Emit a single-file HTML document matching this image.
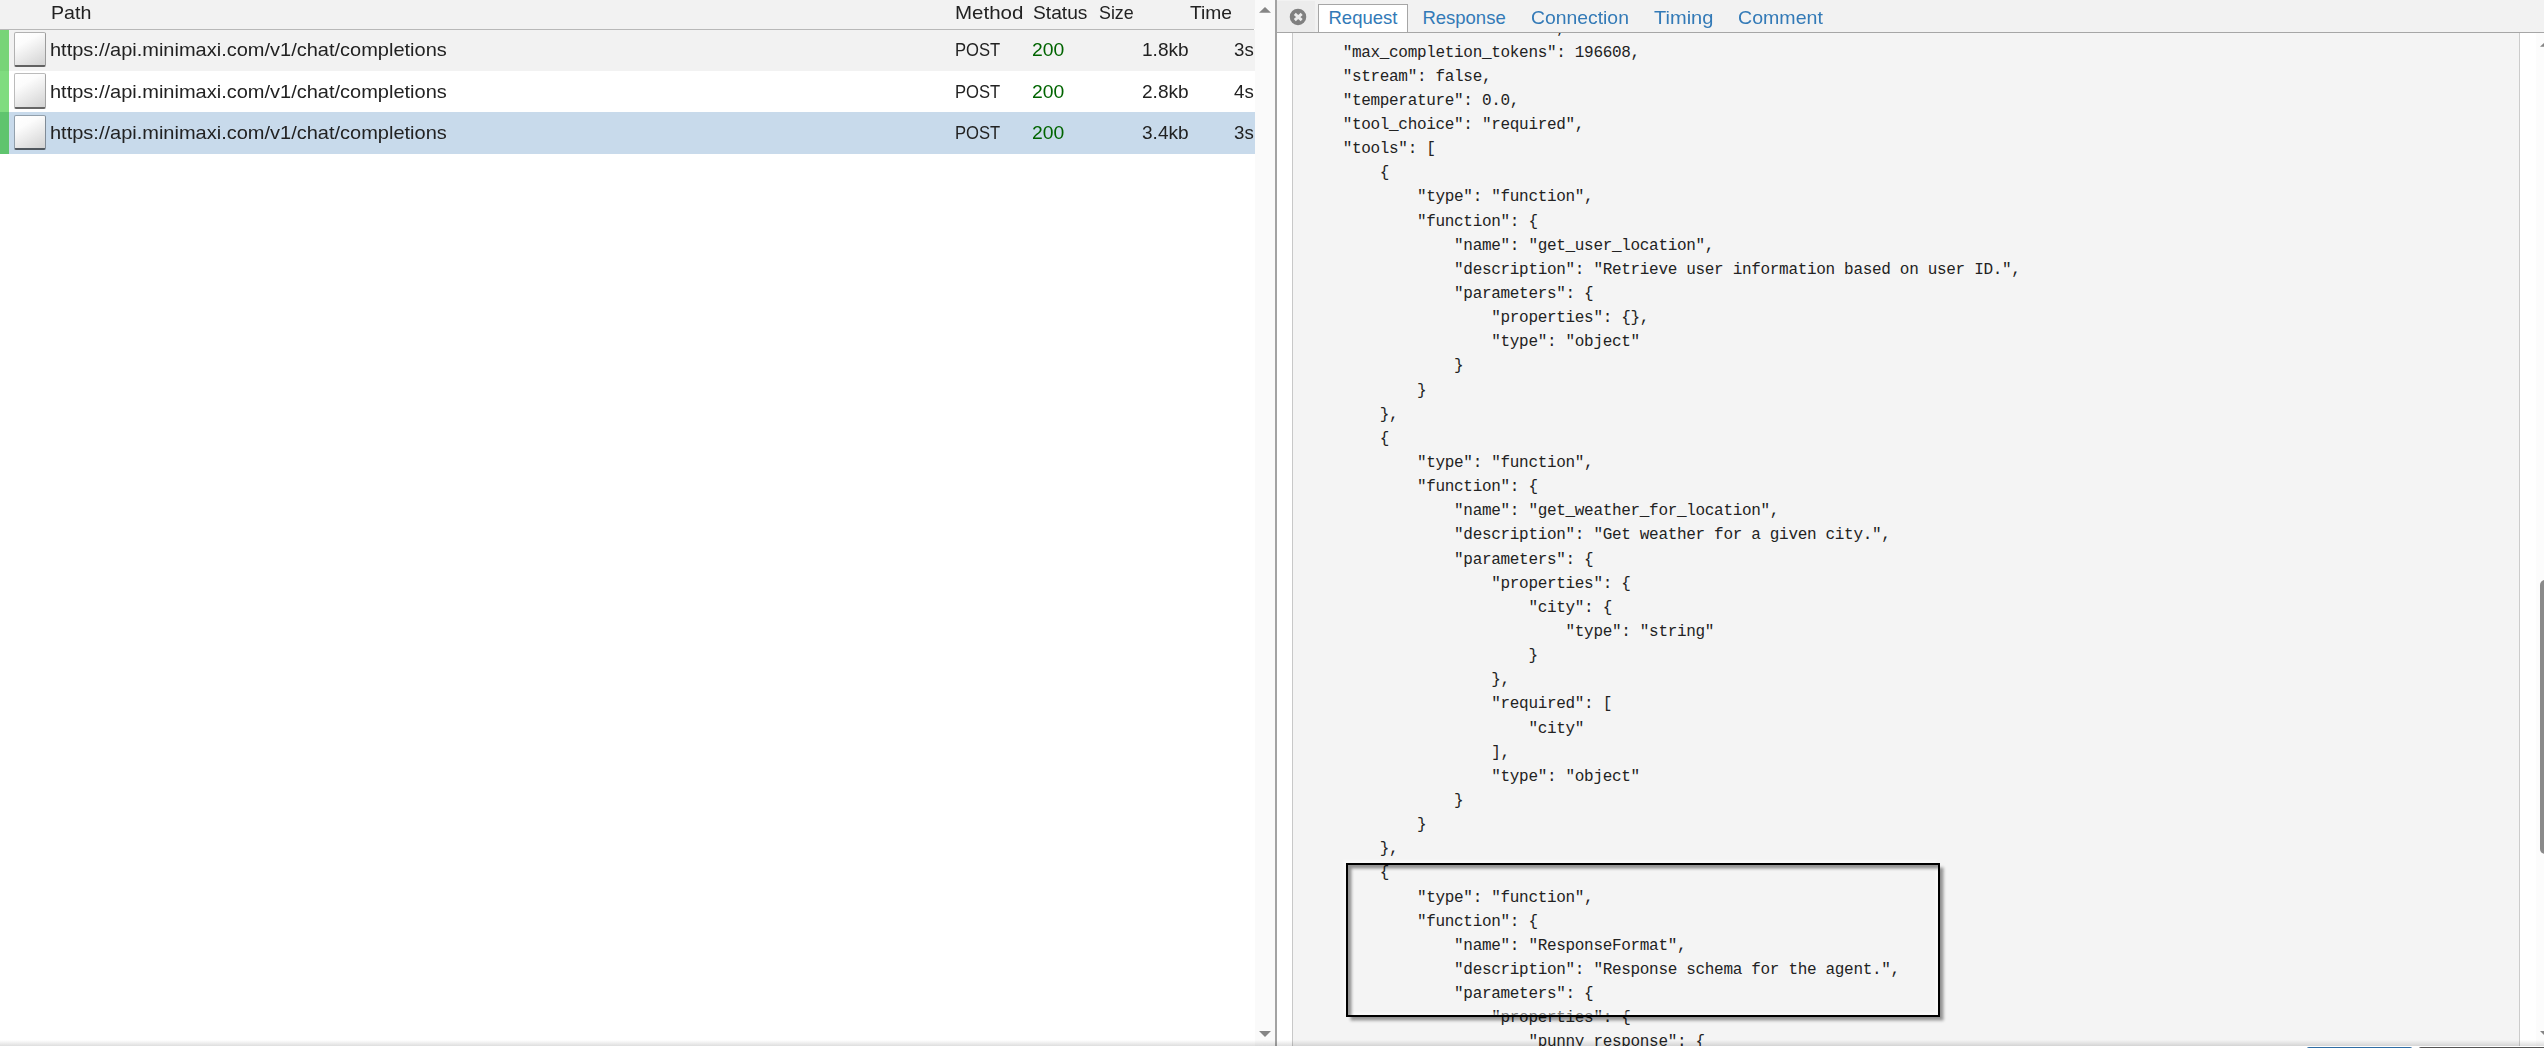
<!DOCTYPE html>
<html><head><meta charset="utf-8">
<style>
*{box-sizing:border-box;margin:0;padding:0}
html,body{width:2544px;height:1048px;overflow:hidden;background:#fff;font-family:"Liberation Sans",sans-serif;color:#222}
.a{position:absolute}
.t{position:absolute;white-space:pre;line-height:1;transform-origin:0 50%;font-size:18.5px}
#thead{left:0;top:0;width:1255px;height:29px;background:#f2f2f2}
#thline{left:0;top:29px;width:1254px;height:1px;background:#b8b8b8}
.row{left:9px;width:1246px;height:41.3px}
.tls{left:0;width:9px;height:41.3px}
.ico{left:14.2px;width:31.4px;height:35.7px;border-radius:2px;background-clip:padding-box;
 background-image:linear-gradient(150deg,#fff 0%,#fcfcfc 30%,#e4e4e4 70%,#d2d2d2 100%);
 border:1.5px solid rgba(0,0,0,0.27);border-right-color:rgba(0,0,0,0.36);border-bottom:2px solid rgba(0,0,0,0.6);filter:blur(0.3px)}
#lsb{left:1255px;top:0;width:20px;height:1046px;background:#fafafa}
#div{left:1275px;top:0;width:2px;height:1046px;background:#a3a3a3}
#nav{left:1277px;top:0;width:1267px;height:32px;background:#f2f2f2}
#navline{left:1277px;top:32px;width:1267px;height:1px;background:#a6a6a6}
#closebg{left:1277px;top:1px;width:38px;height:31px;background:#ececec}
#tabreq{left:1318px;top:4px;width:90px;height:28px;background:#fff;border:1px solid #a6a6a6;border-bottom:none}
.tab{color:#337ab7}
#wstrip{left:1277px;top:33px;width:15px;height:1013px;background:#fff}
#vl1{left:1292px;top:33px;width:1px;height:1013px;background:#c8c8c8}
#content{left:1293px;top:33px;width:1226px;height:1013px;background:#f4f4f4;overflow:hidden}
#vl2{left:2519px;top:33px;width:1px;height:1013px;background:#cccccc}
#rsb{left:2520px;top:33px;width:24px;height:1013px;background:#fff}
#rsbtrack{left:2536px;top:33px;width:8px;height:1013px;background:#fcfcfc}
#thumb{left:2540px;top:580px;width:10px;height:274px;background:#8a8a8a;border-radius:5px}
pre{position:absolute;left:12.5px;top:-16.5px;font-family:"Liberation Mono",monospace;font-size:16px;line-height:24.1406px;letter-spacing:-0.315px;color:#222}
#shadowb{left:0;top:1040px;width:2544px;height:6px;background:linear-gradient(to bottom,rgba(0,0,0,0),rgba(0,0,0,0.13))}
#foot{left:0;top:1046px;width:2544px;height:2px;background:#fff}
#box{left:1346px;top:863px;width:594px;height:154px;border:2px solid #000;box-shadow:3.5px 3.5px 3px rgba(0,0,0,0.4),inset 3.5px 3.5px 3px rgba(0,0,0,0.4),-3px -3px 2px rgba(255,255,255,0.45),inset -3px -3px 2px rgba(255,255,255,0.45)}
#boxsh{left:1349px;top:866px;width:594px;height:154px;border:2px solid rgba(0,0,0,0.42);filter:blur(0.7px)}
</style></head><body>
<div class="a" id="thead"></div><div class="a" id="thline"></div>
<div class="a row" style="top:30px;height:41px;background:#f2f2f2"></div>
<div class="a tls" style="top:30px;height:41px;background:#78d478"></div>
<div class="a ico" style="top:31.8px"></div>
<div class="a row" style="top:71px;height:41px;background:#ffffff"></div>
<div class="a tls" style="top:71px;height:41px;background:#7fdc7f"></div>
<div class="a ico" style="top:73.2px"></div>
<div class="a row" style="top:112px;height:42px;background:#c8daeb"></div>
<div class="a tls" style="top:112px;height:42px;background:#5fc46e"></div>
<div class="a ico" style="top:114.8px"></div>
<div class="t " style="left:51.2px;top:4px;transform:scaleX(1.06);">Path</div>
<div class="t " style="left:955px;top:4px;transform:scaleX(1.108);">Method</div>
<div class="t " style="left:1033.3px;top:4px;transform:scaleX(1.037);">Status</div>
<div class="t " style="left:1098.7px;top:4px;transform:scaleX(0.965);">Size</div>
<div class="t " style="left:1190.3px;top:4px;transform:scaleX(1.04);">Time</div>
<div class="t " style="left:50.3px;top:41.3px;transform:scaleX(1.081);">https://api.minimaxi.com/v1/chat/completions</div>
<div class="t " style="left:954.7px;top:41.3px;transform:scaleX(0.898);">POST</div>
<div class="t " style="left:1032px;top:41.3px;transform:scaleX(1.045);color:#006400">200</div>
<div class="t " style="left:1142.1px;top:41.3px;transform:scaleX(1.03);">1.8kb</div>
<div class="t " style="left:1234px;top:41.3px;transform:scaleX(1.01);">3s</div>
<div class="t " style="left:50.3px;top:82.6px;transform:scaleX(1.081);">https://api.minimaxi.com/v1/chat/completions</div>
<div class="t " style="left:954.7px;top:82.6px;transform:scaleX(0.898);">POST</div>
<div class="t " style="left:1032px;top:82.6px;transform:scaleX(1.045);color:#006400">200</div>
<div class="t " style="left:1142.1px;top:82.6px;transform:scaleX(1.03);">2.8kb</div>
<div class="t " style="left:1234px;top:82.6px;transform:scaleX(1.01);">4s</div>
<div class="t " style="left:50.3px;top:123.9px;transform:scaleX(1.081);">https://api.minimaxi.com/v1/chat/completions</div>
<div class="t " style="left:954.7px;top:123.9px;transform:scaleX(0.898);">POST</div>
<div class="t " style="left:1032px;top:123.9px;transform:scaleX(1.045);color:#006400">200</div>
<div class="t " style="left:1142.1px;top:123.9px;transform:scaleX(1.03);">3.4kb</div>
<div class="t " style="left:1234px;top:123.9px;transform:scaleX(1.01);">3s</div>
<div class="a" id="lsb"></div>
<svg class="a" style="left:1259px;top:7px" width="12" height="6"><polygon points="0,5.8 6,0 12,5.8" fill="#858585"/></svg>
<svg class="a" style="left:1259px;top:1031px" width="12" height="6"><polygon points="0,0 12,0 6,6" fill="#858585"/></svg>
<div class="a" id="div"></div>
<div class="a" id="content"><pre>    "model": "MiniMax-M2.1",
    "max_completion_tokens": 196608,
    "stream": false,
    "temperature": 0.0,
    "tool_choice": "required",
    "tools": [
        {
            "type": "function",
            "function": {
                "name": "get_user_location",
                "description": "Retrieve user information based on user ID.",
                "parameters": {
                    "properties": {},
                    "type": "object"
                }
            }
        },
        {
            "type": "function",
            "function": {
                "name": "get_weather_for_location",
                "description": "Get weather for a given city.",
                "parameters": {
                    "properties": {
                        "city": {
                            "type": "string"
                        }
                    },
                    "required": [
                        "city"
                    ],
                    "type": "object"
                }
            }
        },
        {
            "type": "function",
            "function": {
                "name": "ResponseFormat",
                "description": "Response schema for the agent.",
                "parameters": {
                    "properties": {
                        "punny_response": {
                            "type": "string"
                        }
</pre></div>
<div class="a" id="wstrip"></div><div class="a" id="vl1"></div><div class="a" id="vl2"></div><div class="a" id="rsb"></div><div class="a" id="rsbtrack"></div><div class="a" id="thumb"></div>
<svg class="a" style="left:2540px;top:41px" width="12" height="6"><polygon points="0,5.8 6,0 12,5.8" fill="#858585"/></svg>
<svg class="a" style="left:2540px;top:1031px" width="12" height="6"><polygon points="0,0 12,0 6,6" fill="#858585"/></svg>
<div class="a" id="nav"></div><div class="a" id="closebg"></div><div class="a" id="navline"></div><div class="a" id="tabreq"></div>
<svg class="a" style="left:1289px;top:8px" width="18" height="18" viewBox="0 0 18 18"><circle cx="9" cy="8.9" r="8.25" fill="#808080"/><path d="M5.8 5.9 L12.7 12.1 M12.7 5.9 L5.8 12.1" stroke="#ececec" stroke-width="2.9"/></svg>
<div class="t tab" style="left:1328.5px;top:9px;">Request</div>
<div class="t tab" style="left:1422.4px;top:9px;">Response</div>
<div class="t tab" style="left:1531px;top:9px;transform:scaleX(1.046);">Connection</div>
<div class="t tab" style="left:1654px;top:9px;transform:scaleX(1.083);">Timing</div>
<div class="t tab" style="left:1738px;top:9px;transform:scaleX(1.058);">Comment</div>
<div class="a" id="box"></div>
<div class="a" id="shadowb"></div><div class="a" id="foot"></div>
<div class="a" style="left:2306px;top:1046.5px;width:107px;height:10px;background:#337ab7;border:1px solid #2e6da4;border-radius:3px"></div>
<div class="a" style="left:2418px;top:1046.5px;width:140px;height:10px;background:#777;border:1px solid #555;border-radius:3px"></div>
</body></html>
